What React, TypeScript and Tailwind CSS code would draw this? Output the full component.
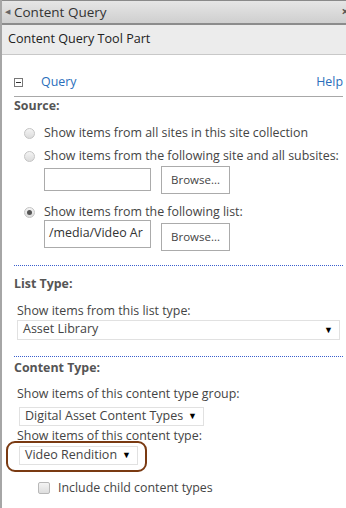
const font = { fontFamily: '"Open Sans", "Noto Sans", sans-serif' };

function Radio({ checked = false }: { checked?: boolean }) {
  return (
    <span className="flex h-[11px] w-[11px] shrink-0 items-center justify-center rounded-full border border-[#c4c4c4] bg-gradient-to-b from-[#f4f4f4] to-[#dcdcdc]">
      {checked && <span className="h-[5px] w-[5px] rounded-full bg-[#555]" />}
    </span>
  );
}

function Browse({ className = '' }: { className?: string }) {
  return (
    <button
      className={`flex h-[28px] w-[69px] items-center justify-center border border-[#ababab] bg-white text-[11.5px] text-[#444] ${className}`}
    >
      Browse...
    </button>
  );
}

function Select({ label, className = '' }: { label: string; className?: string }) {
  return (
    <div
      className={`flex h-[19px] items-center justify-between whitespace-nowrap border border-[#e1e1e1] bg-white pl-[5px] pr-[6px] text-[12.5px] text-[#444] ${className}`}
    >
      <span>{label}</span>
      <span className="text-[9px] text-black">▼</span>
    </div>
  );
}

export default function App() {
  return (
    <div className="h-[508px] w-[346px] overflow-hidden bg-white" style={font}>
      <div className="flex h-full flex-col border-l-2 border-[#a6a6a6]">
        {/* title bar */}
        <div className="flex h-[25px] items-center justify-between border-t border-b-2 border-t-[#8a8a8a] border-b-[#8c8c8c] bg-gradient-to-b from-[#e6e6e6] to-[#cfcfcf] pl-[3px]">
          <div className="flex items-center gap-[4px]">
            <span className="text-[7px] text-[#666]">◀</span>
            <span className="text-[13.5px] text-[#333]">Content Query</span>
          </div>
          <span className="-mr-[3px] text-[13px] font-bold text-[#555]">×</span>
        </div>

        <div className="flex h-[30px] items-center border-b border-[#c8c8c8] bg-[#ececec] pl-[6px] text-[12.6px] text-[#222]">
          Content Query Tool Part
        </div>

        <div className="flex flex-col pl-[12px] pr-[3px] text-[12.4px]">
          <div className="mt-[18px] flex items-center justify-between border-b border-[#a8a8a8] pb-[4px]">
            <div className="flex items-center">
              <span className="flex h-[9px] w-[9px] items-center justify-center border border-[#777] bg-white">
                <span className="h-px w-[5px] bg-[#333]" />
              </span>
              <span className="ml-[18px] text-[#2a6ebb]">Query</span>
            </div>
            <span className="text-[#2a6ebb]">Help</span>
          </div>

          <div className="font-bold leading-[18px] text-[#555]">Source:</div>

          <div className="mt-[9px] flex flex-col text-[#444]">
            <div className="flex h-[20px] items-center">
              <span className="ml-[10px] mr-[9px]"><Radio /></span>
              Show items from all sites in this site collection
            </div>
            <div className="mt-[3px] flex h-[20px] items-center whitespace-nowrap">
              <span className="ml-[10px] mr-[9px]"><Radio /></span>
              Show items from the following site and all subsites:
            </div>
            <div className="ml-[30px] mt-[-1px] flex items-center gap-[10px]">
              <div className="h-[23px] w-[107px] border border-[#ababab] bg-white" />
              <Browse />
            </div>
            <div className="mt-[9px] flex h-[20px] items-center">
              <span className="ml-[10px] mr-[9px]"><Radio checked /></span>
              Show items from the following list:
            </div>
            <div className="ml-[30px] mt-[-3px] flex items-start gap-[10px]">
              <div className="flex h-[28px] w-[107px] items-center overflow-hidden whitespace-nowrap border border-[#ababab] bg-white pl-[4px] text-[#333]">
                /media/Video Ar
              </div>
              <Browse className="mt-[3px] h-[27px]" />
            </div>
          </div>

          <div className="mt-[14px] border-t border-dotted border-[#3a5fcd]" />
          <div className="mt-[9px] font-bold leading-[18px] text-[#555]">List Type:</div>
          <div className="ml-[3px] mt-[9px] leading-[18px] text-[#444]">
            Show items from this list type:
          </div>
          <Select label="Asset Library" className="ml-[3px] mr-[3px] h-[20px]" />

          <div className="mt-[16px] border-t border-dotted border-[#3a5fcd]" />
          <div className="mt-[2px] font-bold leading-[18px] text-[#555]">Content Type:</div>
          <div className="ml-[3px] mt-[8px] leading-[18px] text-[#444]">
            Show items of this content type group:
          </div>
          <Select label="Digital Asset Content Types" className="ml-[5px] mt-[4px] h-[18px] w-[185px]" />
          <div className="ml-[3px] mt-[1px] leading-[18px] text-[#444]">
            Show items of this content type:
          </div>
          <div className="-ml-[8px] -mt-[4px] w-[141px] rounded-[9px] border-2 border-[#7a3a12] pb-[5px] pl-[11px] pr-[7px] pt-[3px]">
            <Select label="Video Rendition" className="h-[18px] w-[119px]" />
          </div>
          <div className="ml-[24px] mt-[7px] flex items-center text-[#444]">
            <span className="h-[12px] w-[12px] rounded-[2px] border border-[#b8b8b8] bg-gradient-to-b from-[#f4f4f4] to-[#dedede]" />
            <span className="ml-[8px]">Include child content types</span>
          </div>
        </div>
      </div>
    </div>
  );
}
